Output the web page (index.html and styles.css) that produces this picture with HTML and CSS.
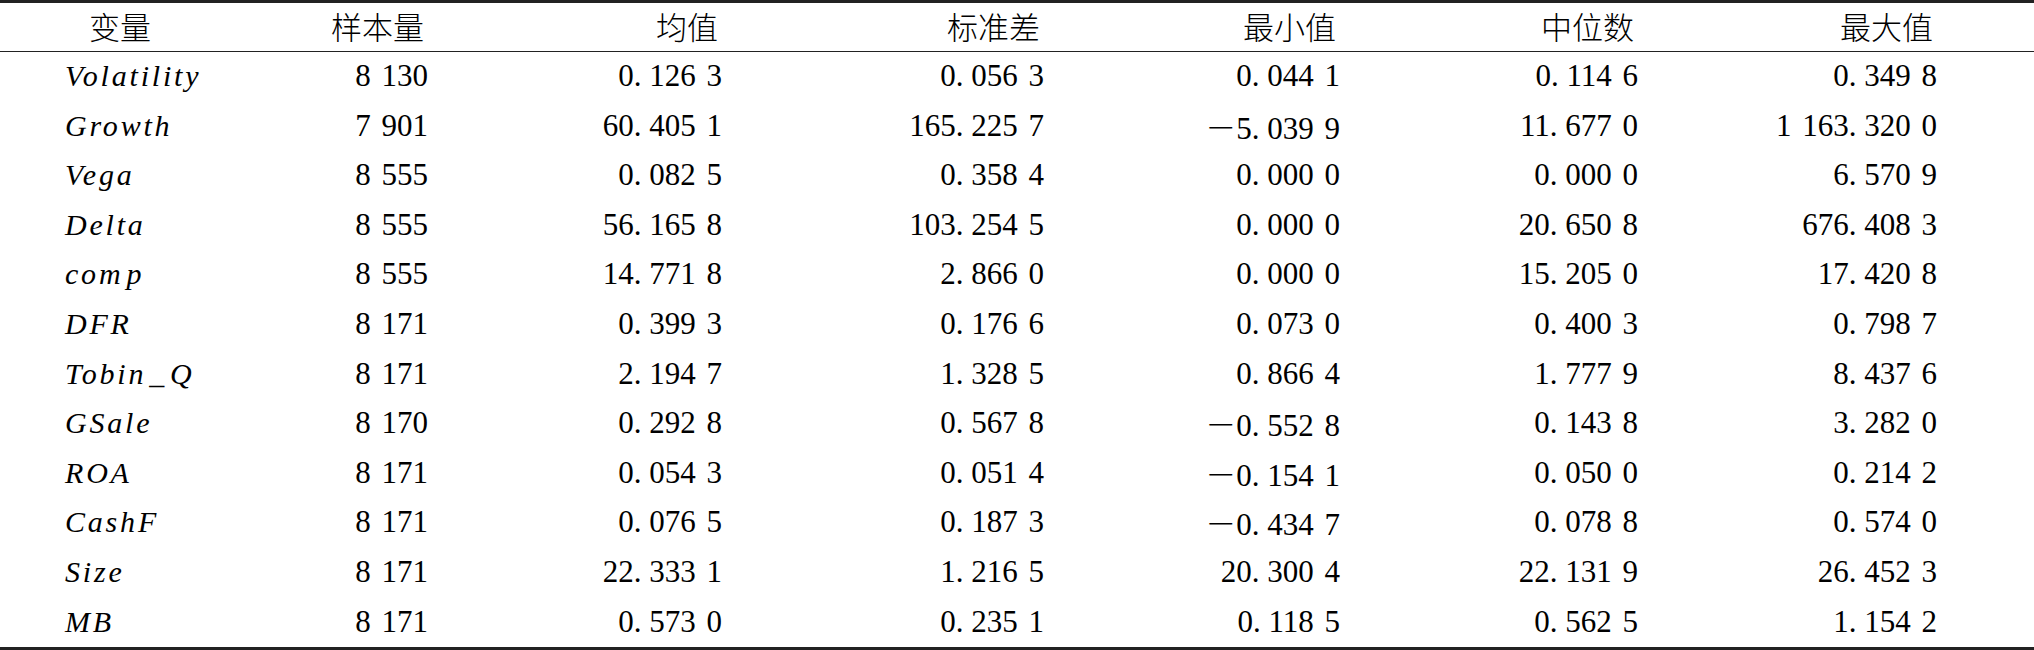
FILE: index.html
```html
<!DOCTYPE html>
<html lang="en">
<head>
<meta charset="utf-8">
<title>Descriptive statistics</title>
<link rel="stylesheet" href="styles.css">
</head>
<body>
<div class="tbl">
  <div class="row head" lang="zh-CN">
    <div class="h name">变量</div>
    <div class="h">样本量</div>
    <div class="h">均值</div>
    <div class="h">标准差</div>
    <div class="h">最小值</div>
    <div class="h">中位数</div>
    <div class="h">最大值</div>
  </div>
  <div class="tbody">
    <div class="row">
      <div class="c name"><span class="nm">Volatility</span></div>
      <div class="c">8 130</div>
      <div class="c">0<span class="pt">.</span>126 3</div>
      <div class="c">0<span class="pt">.</span>056 3</div>
      <div class="c">0<span class="pt">.</span>044 1</div>
      <div class="c">0<span class="pt">.</span>114 6</div>
      <div class="c">0<span class="pt">.</span>349 8</div>
    </div>
    <div class="row">
      <div class="c name"><span class="nm">Growth</span></div>
      <div class="c">7 901</div>
      <div class="c">60<span class="pt">.</span>405 1</div>
      <div class="c">165<span class="pt">.</span>225 7</div>
      <div class="c"><span class="neg">－</span>5<span class="pt">.</span>039 9</div>
      <div class="c">11<span class="pt">.</span>677 0</div>
      <div class="c">1 163<span class="pt">.</span>320 0</div>
    </div>
    <div class="row">
      <div class="c name"><span class="nm">Vega</span></div>
      <div class="c">8 555</div>
      <div class="c">0<span class="pt">.</span>082 5</div>
      <div class="c">0<span class="pt">.</span>358 4</div>
      <div class="c">0<span class="pt">.</span>000 0</div>
      <div class="c">0<span class="pt">.</span>000 0</div>
      <div class="c">6<span class="pt">.</span>570 9</div>
    </div>
    <div class="row">
      <div class="c name"><span class="nm">Delta</span></div>
      <div class="c">8 555</div>
      <div class="c">56<span class="pt">.</span>165 8</div>
      <div class="c">103<span class="pt">.</span>254 5</div>
      <div class="c">0<span class="pt">.</span>000 0</div>
      <div class="c">20<span class="pt">.</span>650 8</div>
      <div class="c">676<span class="pt">.</span>408 3</div>
    </div>
    <div class="row">
      <div class="c name"><span class="nm">com<span class="gap">p</span></span></div>
      <div class="c">8 555</div>
      <div class="c">14<span class="pt">.</span>771 8</div>
      <div class="c">2<span class="pt">.</span>866 0</div>
      <div class="c">0<span class="pt">.</span>000 0</div>
      <div class="c">15<span class="pt">.</span>205 0</div>
      <div class="c">17<span class="pt">.</span>420 8</div>
    </div>
    <div class="row">
      <div class="c name"><span class="nm">DFR</span></div>
      <div class="c">8 171</div>
      <div class="c">0<span class="pt">.</span>399 3</div>
      <div class="c">0<span class="pt">.</span>176 6</div>
      <div class="c">0<span class="pt">.</span>073 0</div>
      <div class="c">0<span class="pt">.</span>400 3</div>
      <div class="c">0<span class="pt">.</span>798 7</div>
    </div>
    <div class="row">
      <div class="c name"><span class="nm">Tobin<span class="us">_</span>Q</span></div>
      <div class="c">8 171</div>
      <div class="c">2<span class="pt">.</span>194 7</div>
      <div class="c">1<span class="pt">.</span>328 5</div>
      <div class="c">0<span class="pt">.</span>866 4</div>
      <div class="c">1<span class="pt">.</span>777 9</div>
      <div class="c">8<span class="pt">.</span>437 6</div>
    </div>
    <div class="row">
      <div class="c name"><span class="nm">GSale</span></div>
      <div class="c">8 170</div>
      <div class="c">0<span class="pt">.</span>292 8</div>
      <div class="c">0<span class="pt">.</span>567 8</div>
      <div class="c"><span class="neg">－</span>0<span class="pt">.</span>552 8</div>
      <div class="c">0<span class="pt">.</span>143 8</div>
      <div class="c">3<span class="pt">.</span>282 0</div>
    </div>
    <div class="row">
      <div class="c name"><span class="nm">ROA</span></div>
      <div class="c">8 171</div>
      <div class="c">0<span class="pt">.</span>054 3</div>
      <div class="c">0<span class="pt">.</span>051 4</div>
      <div class="c"><span class="neg">－</span>0<span class="pt">.</span>154 1</div>
      <div class="c">0<span class="pt">.</span>050 0</div>
      <div class="c">0<span class="pt">.</span>214 2</div>
    </div>
    <div class="row">
      <div class="c name"><span class="nm">CashF</span></div>
      <div class="c">8 171</div>
      <div class="c">0<span class="pt">.</span>076 5</div>
      <div class="c">0<span class="pt">.</span>187 3</div>
      <div class="c"><span class="neg">－</span>0<span class="pt">.</span>434 7</div>
      <div class="c">0<span class="pt">.</span>078 8</div>
      <div class="c">0<span class="pt">.</span>574 0</div>
    </div>
    <div class="row">
      <div class="c name"><span class="nm">Size</span></div>
      <div class="c">8 171</div>
      <div class="c">22<span class="pt">.</span>333 1</div>
      <div class="c">1<span class="pt">.</span>216 5</div>
      <div class="c">20<span class="pt">.</span>300 4</div>
      <div class="c">22<span class="pt">.</span>131 9</div>
      <div class="c">26<span class="pt">.</span>452 3</div>
    </div>
    <div class="row">
      <div class="c name"><span class="nm">MB</span></div>
      <div class="c">8 171</div>
      <div class="c">0<span class="pt">.</span>573 0</div>
      <div class="c">0<span class="pt">.</span>235 1</div>
      <div class="c">0<span class="pt">.</span>118 5</div>
      <div class="c">0<span class="pt">.</span>562 5</div>
      <div class="c">1<span class="pt">.</span>154 2</div>
    </div>
  </div>
</div>
</body>
</html>
```
FILE: styles.css
```css
html, body {
  margin: 0;
  padding: 0;
  background: #fff;
}

body {
  color: #000;
}

.tbl {
  width: 2034px;
  height: 650px;
  box-sizing: border-box;
  border-top: 3px solid #222;
  border-bottom: 3px solid #222;
  overflow: hidden;
}

.row {
  display: grid;
  grid-template-columns: 250px 178px 294px 322px 296px 298px 299px;
}

.head {
  height: 48px;
  line-height: 46px;
  border-bottom: 1px solid #222;
}

.h {
  font-family: "Noto Sans CJK SC";
  font-weight: 300;
  font-size: 31px;
  text-align: right;
  padding-right: 4px;
  white-space: nowrap;
}

.tbody .row {
  height: 49.6px;
  line-height: 48px;
}

.c {
  font-family: "Liberation Serif";
  font-size: 31px;
  word-spacing: 3px;
  text-align: right;
  white-space: nowrap;
}

.name {
  text-align: left;
  padding-left: 65px;
}

.head .name {
  padding-left: 89px;
}

.nm {
  font-style: italic;
  font-size: 30px;
  letter-spacing: 2.8px;
}

.gap {
  margin-left: 3px;
}

.us {
  margin: 0 3px;
}

.pt {
  letter-spacing: 7.75px;
}

.neg {
  font-family: "Noto Sans CJK SC";
  font-weight: 300;
  word-spacing: 0;
}
```
